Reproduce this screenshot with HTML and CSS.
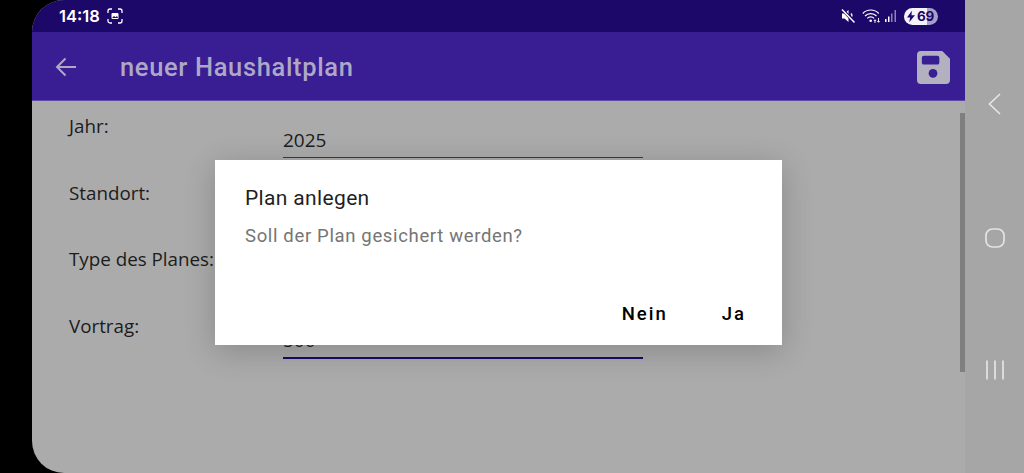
FILE: index.html
```html
<!DOCTYPE html>
<html lang="de">
<head>
<meta charset="utf-8">
<title>neuer Haushaltplan</title>
<link rel="stylesheet" href="styles.css">
</head>
<body>
<div class="screen">
  <div class="cutout"></div>
  <div class="app">
    <div class="status">
      <div class="status-left">
        <span class="time">14:18</span>
        <svg class="shot" width="16" height="16" viewBox="0 0 16 16" fill="none" stroke="#fff" stroke-width="1.300"><path d="M1 5V3a2 2 0 0 1 2-2h2M11 1h2a2 2 0 0 1 2 2v2M15 11v2a2 2 0 0 1-2 2h-2M5 15H3a2 2 0 0 1-2-2v-2"/><rect x="4.500" y="5" width="7" height="6" rx="1" fill="#fff" stroke="none"/><path d="M5 10l2-2 1.500 1.200L10 8l1 2z" fill="#1c0868" stroke="none"/></svg>
      </div>
      <div class="status-right">
        <svg class="mute" width="16" height="16" viewBox="0 0 16 16"><path d="M2 5.500h2.500L8.500 2v12L4.500 10.500H2z" fill="#fff"/><path d="M11 5.500a4 4 0 0 1 1 3" stroke="#fff" stroke-width="1.300" fill="none"/><path d="M2.500 1.500l12 13" stroke="#1c0868" stroke-width="3.200"/><path d="M2 1.500l12.500 13" stroke="#fff" stroke-width="1.500"/></svg>
        <svg width="20" height="16" viewBox="0 0 20 16" fill="none" stroke="#fff" stroke-width="1.200"><path d="M.8 5.500C5 .8 12.500 .8 16.700 5.500M3 8c3-3.200 8.500-3.200 11.500 0M5.300 10.300c1.800-1.800 5-1.800 6.800 0"/><circle cx="8.700" cy="12.800" r="1.300" fill="#fff" stroke="none"/><path d="M13 15v-3M11.800 13l1.200-1.300 1.200 1.300M16.500 10v4M15.300 13l1.200 1.300 1.200-1.300" stroke-width=".9"/></svg>
        <svg class="signal" width="13" height="16" viewBox="0 0 13 16"><rect x="0" y="11" width="1.500" height="3" fill="#fff"/><rect x="3" y="8.500" width="1.500" height="5.500" fill="#fff"/><rect x="6" y="5.500" width="1.500" height="8.500" fill="#8d83b5"/><rect x="9.500" y="2" width="1.500" height="12" fill="#8d83b5"/></svg>
        <div class="battery">
          <svg width="8" height="13" viewBox="0 0 9 13"><path d="M5.500 0L0 7.500h3.500L2.500 13 9 5H5z" fill="#1c0868"/></svg>
          <span class="level">69</span>
        </div>
      </div>
    </div>
    <header class="appbar">
      <svg class="back" width="24" height="24" viewBox="0 0 24 24" fill="none" stroke="#aea8c6" stroke-width="2"><path d="M22 12H3M11.500 3.500L3 12l8.500 8.500"/></svg>
      <h1 class="title">neuer Haushaltplan</h1>
      <svg class="save" width="33" height="33" viewBox="0 0 34 34"><path d="M4 0h22l8 8v22a4 4 0 0 1-4 4H4a4 4 0 0 1-4-4V4a4 4 0 0 1 4-4z" fill="#b3b0c0"/><rect x="5" y="5" width="18" height="9" rx="2" fill="#391d92"/><circle cx="16.500" cy="23" r="4.500" fill="#391d92"/></svg>
    </header>
    <main class="form">
      <div class="row"><label class="label">Jahr:</label><div class="field"><span class="value">2025</span></div></div>
      <div class="row"><label class="label">Standort:</label><div class="field"></div></div>
      <div class="row"><label class="label">Type des Planes:</label><div class="field"></div></div>
      <div class="row"><label class="label">Vortrag:</label><div class="field active"><span class="value">500</span></div></div>
    </main>
    <div class="scrollbar"></div>
  </div>
  <nav class="nav">
    <svg width="16" height="24" viewBox="0 0 16 24" fill="none" stroke="#e4e4e4" stroke-width="1.700"><path d="M13 2L2.500 12 13 22"/></svg>
    <svg width="20" height="20" viewBox="0 0 20 20" fill="none" stroke="#e4e4e4" stroke-width="1.700"><rect x="1" y="1" width="18" height="18" rx="6.500"/></svg>
    <svg width="20" height="20" viewBox="0 0 20 20" fill="none" stroke="#e4e4e4" stroke-width="1.700"><path d="M2 .5v19M10 .5v19M18 .5v19"/></svg>
  </nav>
  <div class="dialog" role="dialog">
    <h2 class="dialog-title">Plan anlegen</h2>
    <p class="dialog-text">Soll der Plan gesichert werden?</p>
    <div class="dialog-actions">
      <span class="action">Nein</span>
      <span class="action">Ja</span>
    </div>
  </div>
</div>
</body>
</html>
```
FILE: styles.css
```css
* { box-sizing: border-box; }
html, body { margin: 0; padding: 0; height: 100%; overflow: hidden; background: #000; }
.screen { position: relative; display: flex; width: 1024px; height: 473px; background: #000; }
.cutout { width: 32px; flex: none; background: #000; }
.app { position: relative; width: 933px; flex: none; display: flex; flex-direction: column; background: #ababab; border-radius: 32px 0 0 32px; overflow: hidden; }
.status { height: 32px; flex: none; display: flex; justify-content: space-between; align-items: center; background: #1c0868; padding: 0 27px; color: #fff; }
.status-left { display: flex; align-items: center; gap: 7px; }
.time { font: 600 16.500px "Inter", sans-serif; }
.status-right { display: flex; align-items: center; gap: 4px; }
.mute { margin-right: 2px; }
.signal { margin-right: 2px; margin-left: -1px; }
.battery { width: 34px; height: 17px; border-radius: 9px; display: flex; align-items: center; gap: 2px; padding-left: 3px; background: linear-gradient(90deg, #f4f2fa 0, #f4f2fa 68%, #a79fc8 68%); }
.level { font: 700 13.500px "Inter", sans-serif; letter-spacing: -.3px; color: #1c0868; }
.appbar { height: 69px; flex: none; display: flex; align-items: center; background: #391d92; padding: 2px 15px 0 22px; border-bottom: 1px solid #5b4aa6; }
.back { flex: none; }
.title { margin: 0 0 0 42px; flex: 1; font: 500 25.500px "Roboto", sans-serif; letter-spacing: .65px; color: #aea8c6; }
.form { padding: 0 0 0 37px; display: flex; flex-direction: column; }
.row { height: 66.670px; display: flex; }
.label { width: 214px; padding-top: 13px; font: 18.800px/24px "Open Sans", sans-serif; color: #1c1c1c; }
.field { width: 360px; height: 57px; padding-top: 27px; border-bottom: 1px solid #3c3c3c; }
.field.active { border-bottom: 2px solid #1c0868; height: 58px; }
.value { font: 19px/24px "Open Sans", sans-serif; color: #1c1c1c; }
.scrollbar { position: absolute; right: 0; top: 113px; width: 5px; height: 259px; background: #7f7f7f; }
.nav { width: 59px; flex: none; display: flex; flex-direction: column; align-items: center; padding: 92px 0 0; gap: 112px; background: #a6a6a6; }
.nav svg { flex: none; }
.dialog { position: absolute; left: 215px; top: 160px; width: 567px; height: 185px; background: #fff; padding: 23px 30px 0; display: flex; flex-direction: column; box-shadow: 0 6px 30px rgba(0, 0, 0, .2); }
.dialog-title { margin: 0; font: 400 21px/30px "Roboto", sans-serif; letter-spacing: .35px; color: #1f1f1f; }
.dialog-text { margin: 11px 0 0; font: 400 18.500px/24px "Roboto", sans-serif; letter-spacing: .65px; color: #757575; }
.dialog-actions { margin-top: auto; padding: 0 6px 19px 0; display: flex; justify-content: flex-end; gap: 54px; }
.action { font: 500 18.500px/24px "Roboto", sans-serif; letter-spacing: 2px; color: #000; }
```
